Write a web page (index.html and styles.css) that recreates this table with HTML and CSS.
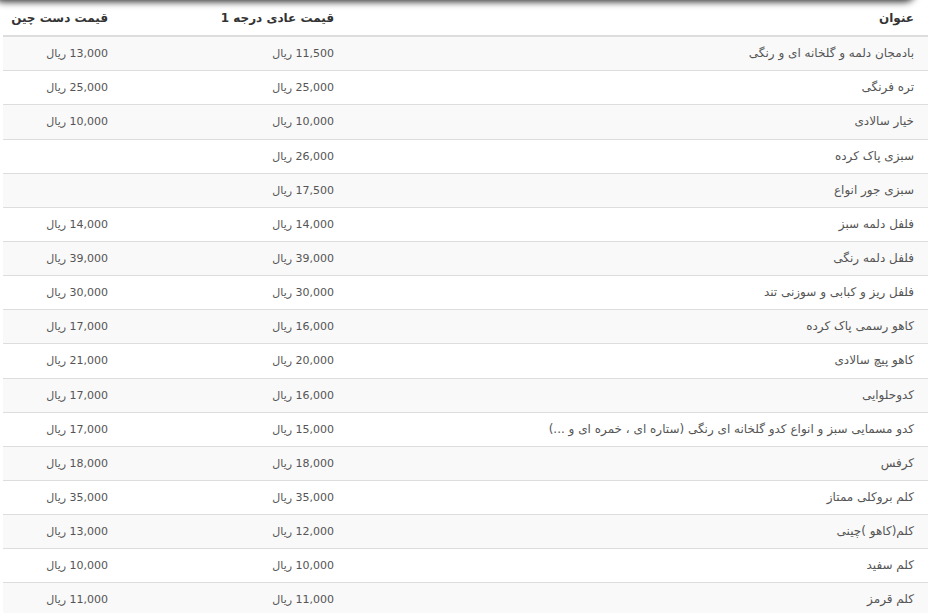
FILE: index.html
```html
<!DOCTYPE html>
<html lang="fa" dir="rtl">
<head>
<meta charset="utf-8">
<link rel="stylesheet" href="styles.css">
</head>
<body>
<div class="page">
  <div class="top-shadow"></div>
  <table class="prices">
    <thead>
      <tr><th class="c-title">عنوان</th><th class="c-p1">قیمت عادی درجه 1</th><th class="c-p2">قیمت دست چین</th></tr>
    </thead>
    <tbody>
      <tr><td>بادمجان دلمه و گلخانه ای و رنگی</td><td>11,500 ریال</td><td>13,000 ریال</td></tr>
      <tr><td>تره فرنگی</td><td>25,000 ریال</td><td>25,000 ریال</td></tr>
      <tr><td>خیار سالادی</td><td>10,000 ریال</td><td>10,000 ریال</td></tr>
      <tr><td>سبزی پاک کرده</td><td>26,000 ریال</td><td></td></tr>
      <tr><td>سبزی جور انواع</td><td>17,500 ریال</td><td></td></tr>
      <tr><td>فلفل دلمه سبز</td><td>14,000 ریال</td><td>14,000 ریال</td></tr>
      <tr><td>فلفل دلمه رنگی</td><td>39,000 ریال</td><td>39,000 ریال</td></tr>
      <tr><td>فلفل ریز و کبابی و سوزنی تند</td><td>30,000 ریال</td><td>30,000 ریال</td></tr>
      <tr><td>کاهو رسمی پاک کرده</td><td>16,000 ریال</td><td>17,000 ریال</td></tr>
      <tr><td>کاهو پیچ سالادی</td><td>20,000 ریال</td><td>21,000 ریال</td></tr>
      <tr><td>کدوحلوایی</td><td>16,000 ریال</td><td>17,000 ریال</td></tr>
      <tr><td>کدو مسمایی سبز و انواع کدو گلخانه ای رنگی (ستاره ای ، خمره ای و ...)</td><td>15,000 ریال</td><td>17,000 ریال</td></tr>
      <tr><td>کرفس</td><td>18,000 ریال</td><td>18,000 ریال</td></tr>
      <tr><td>کلم بروکلی ممتاز</td><td>35,000 ریال</td><td>35,000 ریال</td></tr>
      <tr><td>کلم(کاهو )چینی</td><td>12,000 ریال</td><td>13,000 ریال</td></tr>
      <tr><td>کلم سفید</td><td>10,000 ریال</td><td>10,000 ریال</td></tr>
      <tr><td>کلم قرمز</td><td>11,000 ریال</td><td>11,000 ریال</td></tr>
    </tbody>
  </table>
</div>
</body>
</html>
```

FILE: styles.css
```css
html, body {
  margin: 0;
  padding: 0;
  background: #fff;
}
body {
  font-family: "DejaVu Sans", Tahoma, sans-serif;
  font-size: 11px;
  color: #555;
  overflow: hidden;
}
.page {
  position: relative;
  width: 925px;
}
.top-shadow {
  position: absolute;
  top: -12px;
  left: -10px;
  width: 922px;
  height: 12px;
  border-radius: 0 0 10px 10px;
  box-shadow: 0 2px 7px rgba(0, 0, 0, 0.8);
  z-index: 2;
}
.prices {
  width: 925px;
  border-collapse: collapse;
  border-spacing: 0;
  direction: rtl;
  table-layout: fixed;
}
.prices th,
.prices td {
  padding: 8px 12px 8px 8px;
  line-height: 17.14px;
  text-align: right;
  vertical-align: top;
  white-space: nowrap;
}
.prices th:first-child,
.prices td:first-child {
  padding-right: 14px;
}
.prices th {
  padding-top: 10px;
  font-size: 12px;
  font-weight: bold;
  color: #333;
  border-bottom: 2px solid #ddd;
}
.prices td {
  border-top: 1px solid #ddd;
}
.prices td:first-child {
  font-size: 12px;
}
.prices tbody tr:first-child td {
  border-top: 0;
}
.prices tbody tr:nth-child(odd) td {
  background: #f9f9f9;
}
.c-title { width: 560px; }
.c-p1 { width: 206px; }
.c-p2 { width: 97px; }
```
